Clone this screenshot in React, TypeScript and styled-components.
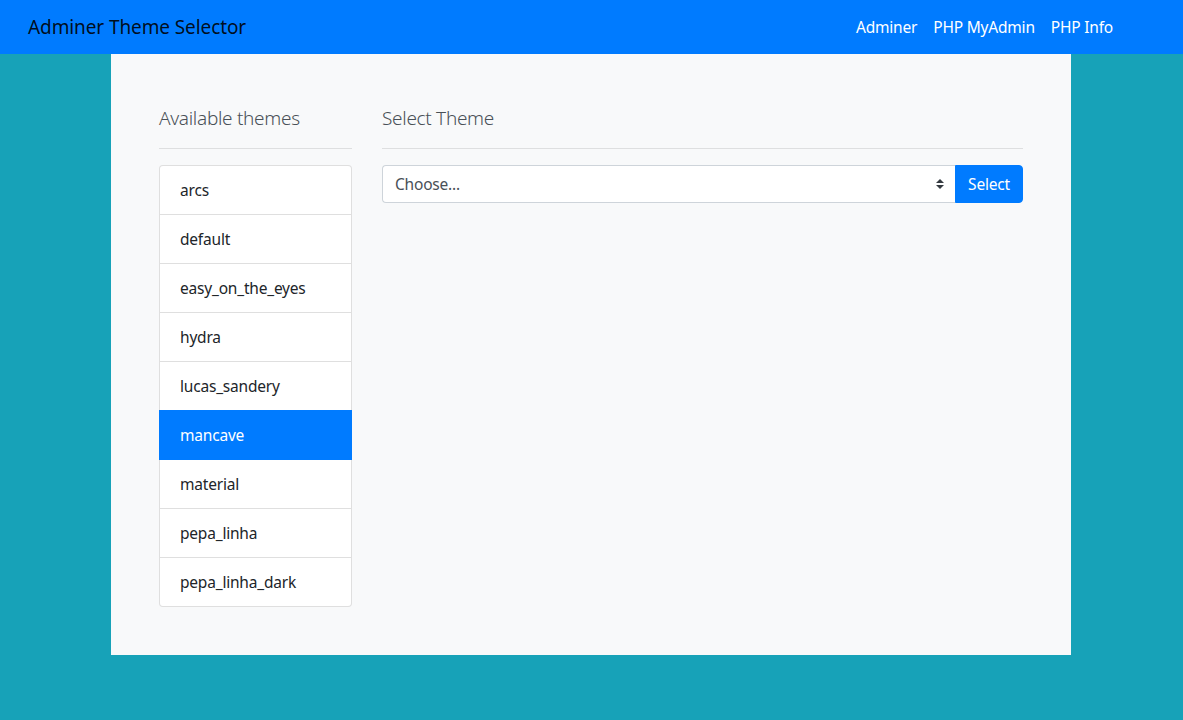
import React from "react";
import styled, { createGlobalStyle } from "styled-components";

const Global = createGlobalStyle`
  html, body { margin: 0; padding: 0; }
  body {
    background: #17a2b8;
    font-family: "Noto Sans", "Open Sans", sans-serif;
    color: #212529;
    min-height: 720px;
  }
  * { box-sizing: border-box; }
`;

const Navbar = styled.nav`
  height: 54px;
  background: #007bff;
  display: flex;
  align-items: center;
  justify-content: space-between;
  padding: 0 62px 0 28px;
`;

const Brand = styled.span`
  font-size: 19px;
  color: rgba(0, 0, 0, 0.9);
  letter-spacing: -0.1px;
`;

const NavLinks = styled.div`
  display: flex;
`;

const NavLink = styled.a`
  color: #fff;
  font-size: 15.5px;
  padding: 0 8px;
  text-decoration: none;
  letter-spacing: -0.2px;
`;

const Container = styled.main`
  width: 960px;
  margin-left: 111px;
  background: #f8f9fa;
  padding: 48px;
  display: grid;
  grid-template-columns: 193px 641px;
  column-gap: 30px;
`;

const Column = styled.section`
  display: flex;
  flex-direction: column;
`;

const Heading = styled.h5`
  margin: 0;
  font-size: 19px;
  font-weight: 300;
  line-height: 32px;
  color: #495057;
  padding-bottom: 14px;
  border-bottom: 1px solid rgba(0, 0, 0, 0.1);
  margin-bottom: 16px;
  letter-spacing: -0.3px;
`;

const List = styled.ul`
  list-style: none;
  margin: 0;
  padding: 0;
  display: flex;
  flex-direction: column;
`;

const Item = styled.li<{ $active?: boolean }>`
  position: relative;
  padding: 12px 20px;
  line-height: 24px;
  font-size: 15.5px;
  background: ${(p) => (p.$active ? "#007bff" : "#fff")};
  color: ${(p) => (p.$active ? "#fff" : "#212529")};
  border: 1px solid ${(p) => (p.$active ? "#007bff" : "rgba(0, 0, 0, 0.125)")};
  z-index: ${(p) => (p.$active ? 2 : 1)};
  margin-top: -1px;
  letter-spacing: -0.2px;
  &:first-child { margin-top: 0; border-radius: 4px 4px 0 0; }
  &:last-child { border-radius: 0 0 4px 4px; }
`;

const InputGroup = styled.div`
  display: flex;
  height: 38px;
`;

const SelectBox = styled.div`
  flex: 1;
  display: flex;
  align-items: center;
  justify-content: space-between;
  padding: 0 11px 0 12px;
  background: #fff;
  border: 1px solid #ced4da;
  border-right: none;
  border-radius: 4px 0 0 4px;
  color: #495057;
  font-size: 15.5px;
  letter-spacing: -0.2px;
`;

const Button = styled.button`
  width: 68px;
  background: #007bff;
  color: #fff;
  border: 1px solid #007bff;
  border-radius: 0 4px 4px 0;
  font-family: inherit;
  font-size: 15.5px;
  padding: 0;
  letter-spacing: -0.2px;
`;

const themes = [
  "arcs",
  "default",
  "easy_on_the_eyes",
  "hydra",
  "lucas_sandery",
  "mancave",
  "material",
  "pepa_linha",
  "pepa_linha_dark",
];

export default function App() {
  return (
    <>
      <Global />
      <Navbar>
        <Brand>Adminer Theme Selector</Brand>
        <NavLinks>
          <NavLink>Adminer</NavLink>
          <NavLink>PHP MyAdmin</NavLink>
          <NavLink>PHP Info</NavLink>
        </NavLinks>
      </Navbar>
      <Container>
        <Column>
          <Heading>Available themes</Heading>
          <List>
            {themes.map((t) => (
              <Item key={t} $active={t === "mancave"}>
                {t}
              </Item>
            ))}
          </List>
        </Column>
        <Column>
          <Heading>Select Theme</Heading>
          <InputGroup>
            <SelectBox>
              <span>Choose...</span>
              <svg width="8" height="10" viewBox="0 0 8 10">
                <path d="M4 0 L8 4 H0 Z M4 10 L0 6 H8 Z" fill="#343a40" />
              </svg>
            </SelectBox>
            <Button>Select</Button>
          </InputGroup>
        </Column>
      </Container>
    </>
  );
}
